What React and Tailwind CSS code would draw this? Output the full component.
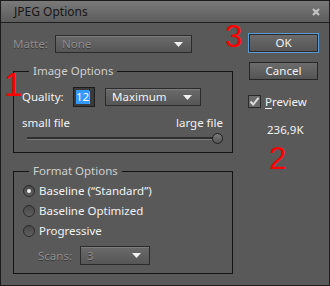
import React from "react";

const font = { fontFamily: '"Noto Sans", "Open Sans", "Liberation Sans", sans-serif' };

function Arrow() {
  return (
    <svg width="9" height="5" viewBox="0 0 9 5" className="shrink-0">
      <path d="M0 0H9L4.5 5Z" fill="#f0f0f0" />
    </svg>
  );
}

function Dropdown({ label, disabled, className }) {
  return (
    <div
      className={
        "flex items-center justify-between border border-[#2b2b2b] bg-gradient-to-b from-[#6a6a6a] to-[#565656] shadow-[inset_0_1px_0_#7c7c7c] pl-[6px] pr-[8px] " +
        className
      }
    >
      <span
        className={
          "text-[11.5px] leading-none " +
          (disabled ? "text-[#8e8e8e] [text-shadow:0_1px_0_#3a3a3a]" : "text-[#f2f2f2]")
        }
      >
        {label}
      </span>
      <Arrow />
    </div>
  );
}

function Radio({ checked, label }) {
  return (
    <div className="flex items-center h-[20px]">
      <div className="w-[12px] h-[12px] rounded-full border border-[#2a2a2a] bg-gradient-to-b from-[#4a4a4a] to-[#5e5e5e] flex items-center justify-center">
        {checked && <div className="w-[4px] h-[4px] rounded-full bg-[#f0f0f0]" />}
      </div>
      <span className="ml-[4px] text-[11.5px] text-[#f2f2f2] leading-none">{label}</span>
    </div>
  );
}

function Group({ title, className, children }) {
  return (
    <div className={"relative border border-[#141414] " + className}>
      <span className="absolute -top-[9px] left-[15px] px-[4px] bg-[#595959] text-[11.5px] leading-[16px] text-[#cfcfcf]">
        {title}
      </span>
      {children}
    </div>
  );
}

export default function App() {
  return (
    <div
      className="relative w-[330px] h-[286px] bg-[#595959] border border-[#1c1c1c] overflow-hidden flex flex-col"
      style={font}
    >
      <div className="h-[22px] shrink-0 bg-gradient-to-b from-[#7a7a7a] to-[#5c5c5c] border-b border-[#1f1f1f] flex items-center justify-between pl-[13px] pr-[9px]">
        <span className="text-[12px] text-[#161616] leading-none">JPEG Options</span>
        <svg width="8" height="8" viewBox="0 0 8 8">
          <path d="M1 1L7 7M7 1L1 7" stroke="#c4c4c4" strokeWidth="2.2" />
        </svg>
      </div>

      <div className="flex">
        <div className="w-[233px] shrink-0 pl-[12px]">
          <div className="mt-[12px] flex items-center h-[18px]">
            <span className="w-[42px] text-[11.5px] text-[#8e8e8e] [text-shadow:0_1px_0_#3a3a3a] leading-none">
              Matte:
            </span>
            <Dropdown label="None" disabled className="w-[137px] h-[18px]" />
          </div>

          <Group title="Image Options" className="mt-[18px] w-[220px] h-[82px]">
            <div className="pt-[15px] pl-[8px] pr-[9px]">
              <div className="flex items-center h-[20px]">
                <span className="w-[51px] text-[11.5px] text-[#f2f2f2] leading-none">Quality:</span>
                <div className="w-[22px] h-[20px] border border-[#1c1c1c] bg-[#3a3a3a] flex items-center pl-[2px]">
                  <span className="bg-[#3399ff] text-white text-[11.5px] leading-[14px] px-[0px]">12</span>
                  <span className="w-[1px] h-[13px] bg-[#ff8c1a]" />
                </div>
                <Dropdown label="Maximum" className="ml-[10px] w-[96px] h-[18px]" />
              </div>
              <div className="mt-[9px] flex justify-between text-[11.5px] leading-[14px] text-[#f2f2f2]">
                <span>small file</span>
                <span>large file</span>
              </div>
              <div className="mt-[3px] flex items-center h-[11px] pl-[5px]">
                <div className="flex-1 h-[3px] bg-[#2e2e2e] border-b border-[#7a7a7a]" />
                <div className="-ml-[6px] w-[11px] h-[11px] rounded-full border border-[#1e1e1e] bg-gradient-to-b from-[#7a7a7a] to-[#555]" />
              </div>
            </div>
          </Group>

          <Group title="Format Options" className="mt-[18px] w-[220px] h-[103px]">
            <div className="pt-[9px] pl-[9px]">
              <Radio checked label={"Baseline (\u201CStandard\u201D)"} />
              <Radio label="Baseline Optimized" />
              <Radio label="Progressive" />
              <div className="mt-[5px] ml-[15px] flex items-center h-[19px]">
                <span className="w-[42px] text-[11.5px] text-[#8e8e8e] [text-shadow:0_1px_0_#3a3a3a] leading-none">
                  Scans:
                </span>
                <Dropdown label="3" disabled className="w-[70px] h-[19px]" />
              </div>
            </div>
          </Group>
        </div>

        <div className="ml-[14px] pt-[10px] w-[71px] flex flex-col">
          <div className="h-[20px] border border-[#5b9bd5] bg-gradient-to-b from-[#6c6c6c] to-[#545454] shadow-[inset_0_0_0_1px_#2a2a2a] flex items-center justify-center text-[11.5px] text-[#f2f2f2] leading-none">
            OK
          </div>
          <div className="mt-[9px] mx-[1px] h-[18px] border border-[#262626] bg-gradient-to-b from-[#6c6c6c] to-[#545454] flex items-center justify-center text-[11.5px] text-[#f2f2f2] leading-none">
            Cancel
          </div>
          <div className="mt-[15px] flex items-center">
            <div className="w-[13px] h-[13px] border border-[#2a2a2a] bg-[#6a6a6a] flex items-center justify-center">
              <svg width="11" height="11" viewBox="0 0 11 11">
                <path d="M1.5 5.5L4.2 8.5L9.5 1.8" stroke="#dcdcdc" strokeWidth="2" fill="none" />
              </svg>
            </div>
            <span className="ml-[4px] text-[11.5px] text-[#f2f2f2] leading-none">
              <span className="underline underline-offset-2">P</span>review
            </span>
          </div>
          <div className="mt-[16px] pl-[19px] text-[11.5px] text-[#f2f2f2] leading-none">236,9K</div>
        </div>
      </div>

      <span className="absolute left-[224px] top-[20px] text-[#ff0000] text-[31px] leading-none" style={{ fontFamily: '"Liberation Sans", sans-serif' }}>3</span>
      <span className="absolute left-[3px] top-[67px] text-[#ff0000] text-[33px] leading-none" style={{ fontFamily: '"Liberation Sans", sans-serif' }}>1</span>
      <span className="absolute left-[268px] top-[142px] text-[#ff0000] text-[31px] leading-none" style={{ fontFamily: '"Liberation Sans", sans-serif' }}>2</span>
    </div>
  );
}
